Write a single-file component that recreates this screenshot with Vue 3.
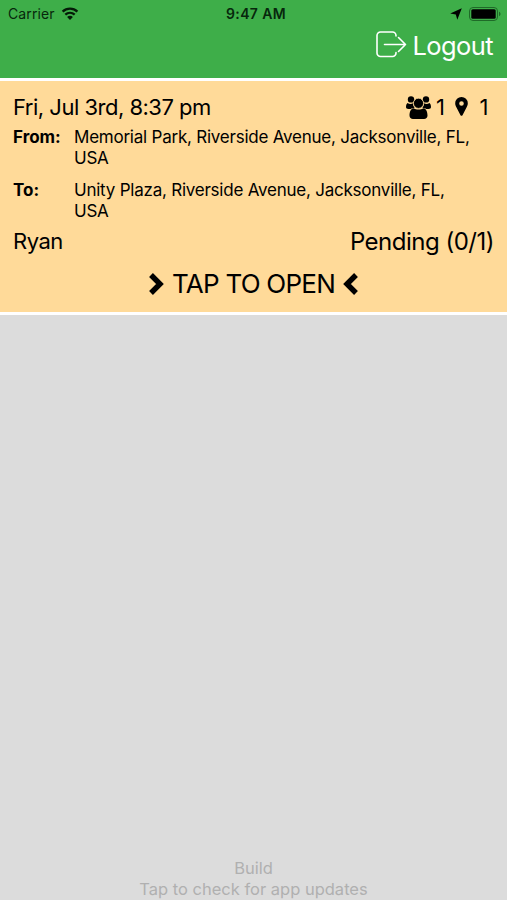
<template>
  <div class="app">
    <header class="header">
      <div class="status-bar">
        <div class="carrier">
          <span>Carrier</span>
          <svg class="wifi" viewBox="0 0 18 13">
            <path d="M1.6 4.6C5.8.7 12.2.7 16.4 4.6M4.3 7.6c2.7-2.4 6.7-2.4 9.4 0" />
            <path class="dot" d="M9 13 6.1 9.9c1.7-1.4 4.1-1.4 5.8 0z" />
          </svg>
        </div>
        <span class="time">9:47 AM</span>
        <div class="indicators">
          <svg class="location" viewBox="0 0 12 12">
            <path d="M11.8.2 7.3 11.8 5.8 6.500.2 5.500z" />
          </svg>
          <svg class="battery" viewBox="0 0 32 14">
            <rect class="shell" x=".5" y=".5" width="28" height="13" rx="3.5" />
            <rect x="2.3" y="2.3" width="24.4" height="9.4" rx="1.5" />
            <path class="cap" d="M30 4.8c2 .7 2 3.7 0 4.4z" />
          </svg>
        </div>
      </div>
      <button class="logout" @click="logout">
        <svg viewBox="0 0 31 27">
          <path d="M20 5V4.5A3.5 3.5 0 0 0 16.5 1H4.5A3.5 3.5 0 0 0 1 4.5v17.500A3.5 3.5 0 0 0 4.5 25.500h12A3.5 3.5 0 0 0 20 22v-.5M8.500 13.500h21M22.500 6.500l7 7-7 7" />
        </svg>
        <span>Logout</span>
      </button>
    </header>

    <section
      v-for="ride in rides"
      :key="ride.id"
      class="ride"
      @click="openRide(ride.id)"
    >
      <div class="row top">
        <span class="date">{{ ride.date }}</span>
        <div class="counts">
          <svg class="users" viewBox="0 0 25 23">
            <circle cx="5" cy="3.400" r="3.200" />
            <circle cx="20" cy="3.400" r="3.200" />
            <path d="M1.600 7C3 8.200 5.500 8.300 7 7.300 7 9.300 7.600 10.600 8.600 11.700 7 11.800 5.600 12.200 4.700 13H2.500C.8 13 0 12.200 0 11 0 9.300.5 7.600 1.600 7zM23.400 7C22 8.200 19.500 8.300 18 7.300 18 9.300 17.400 10.600 16.400 11.700 18 11.800 19.400 12.200 20.300 13H22.500C24.200 13 25 12.200 25 11 25 9.300 24.500 7.600 23.400 7z" />
            <circle class="head" cx="12.500" cy="7.300" r="5.100" />
            <path d="M7.500 12.300C10 14 15 14 17.500 12.300 20.600 12.800 21.500 16.500 21.500 19.500 21.500 21.600 20 23 18 23H7C5 23 3.500 21.600 3.500 19.500 3.500 16.500 4.400 12.800 7.500 12.300z" />
          </svg>
          <span class="riders">{{ ride.riders }}</span>
          <svg class="pin" viewBox="0 0 13 19">
            <path fill-rule="evenodd" d="M6.500 0A6.300 6.300 0 0 0 .2 6.300C.2 8.200.8 9.200 1.500 10.500L5.500 18.200Q6.500 19.500 7.500 18.200L11.500 10.500C12.200 9.200 12.800 8.200 12.800 6.300A6.300 6.300 0 0 0 6.500 0zM6.500 4.200a2.300 2.300 0 1 1 0 4.600 2.300 2.300 0 0 1 0-4.600z" />
          </svg>
          <span class="stops">{{ ride.stops }}</span>
        </div>
      </div>
      <div class="place">
        <label>From:</label>
        <p>{{ ride.from }}</p>
      </div>
      <div class="place">
        <label>To:</label>
        <p>{{ ride.to }}</p>
      </div>
      <div class="row bottom">
        <span class="name">{{ ride.name }}</span>
        <span class="state">{{ ride.state }}</span>
      </div>
      <div class="open">
        <svg viewBox="0 0 15 22"><path d="M2 2 11 11 2 20" /></svg>
        <span>TAP TO OPEN</span>
        <svg viewBox="0 0 15 22"><path d="M13 2 4 11l9 9" /></svg>
      </div>
    </section>

    <footer class="footer">
      <div class="build">Build</div>
      <div class="updates">Tap to check for app updates</div>
    </footer>
  </div>
</template>

<script setup>
import { ref } from "vue";

const rides = ref([
  {
    id: 1,
    date: "Fri, Jul 3rd, 8:37 pm",
    riders: 1,
    stops: 1,
    from: "Memorial Park, Riverside Avenue, Jacksonville, FL, USA",
    to: "Unity Plaza, Riverside Avenue, Jacksonville, FL, USA",
    name: "Ryan",
    state: "Pending (0/1)",
  },
]);

const emit = defineEmits(["logout", "open"]);

const logout = () => {
  emit("logout");
};

const openRide = (id) => {
  emit("open", id);
};
</script>

<style>
body {
  margin: 0;
}
</style>

<style scoped>
.app {
  display: flex;
  flex-direction: column;
  height: 100vh;
  overflow: hidden;
  background: #dcdcdc;
  color: #000;
  font-family: Inter, "Liberation Sans", sans-serif;
  white-space: nowrap;
}

svg {
  display: block;
  flex: none;
}

.header {
  box-sizing: border-box;
  height: 78px;
  background: #3eae49;
}

.status-bar {
  display: grid;
  grid-template-columns: 1fr auto 1fr;
  align-items: center;
  height: 27px;
  padding: 0 6px 0 8px;
  font-size: 14px;
  color: #07270c;
}

.carrier {
  display: flex;
  align-items: center;
  gap: 6px;
  letter-spacing: 0.1px;
}

.wifi {
  width: 18px;
  height: 13px;
  fill: none;
  stroke: #041a07;
  stroke-width: 2.3;
}

.wifi .dot {
  fill: #041a07;
  stroke: none;
}

.time {
  padding-left: 3px;
  font-weight: 600;
  letter-spacing: 0.35px;
}

.indicators {
  display: flex;
  align-items: center;
  justify-content: flex-end;
  gap: 7px;
  fill: #000;
}

.location {
  width: 12px;
  height: 12px;
}

.battery {
  width: 32px;
  height: 14px;
}

.battery .shell {
  fill: none;
  stroke: #1f6a28;
}

.battery .cap {
  fill: #1f6a28;
}

.logout {
  display: flex;
  align-items: center;
  gap: 6px;
  margin: 0 14px 0 auto;
  padding: 0;
  border: 0;
  background: none;
  color: #fff;
  font: inherit;
  font-size: 25.5px;
  line-height: 37px;
  letter-spacing: -0.6px;
}

.logout svg {
  width: 31px;
  height: 27px;
  margin-top: -3px;
  fill: none;
  stroke: #fff;
  stroke-width: 1.6;
  stroke-linecap: round;
  stroke-linejoin: round;
}

.ride {
  box-sizing: border-box;
  height: 237px;
  padding: 11px 13px 0;
  border-top: 3px solid #fff;
  border-bottom: 3px solid #fff;
  background: #ffda99;
}

.row {
  display: flex;
  justify-content: space-between;
  height: 30px;
  font-size: 22px;
  line-height: 30px;
  letter-spacing: -0.5px;
}

.counts {
  display: flex;
  align-items: center;
  margin-right: 6px;
}

.users {
  width: 25px;
  height: 23px;
  margin-right: 5px;
}

.users .head {
  stroke: #ffda99;
  stroke-width: 0.8;
}

.pin {
  width: 13px;
  height: 19px;
  margin: -2px 12px 0 10px;
}

.place {
  display: flex;
  height: 41px;
  padding: 5px 0 7px;
  font-size: 17px;
  line-height: 21px;
}

.place label {
  flex: none;
  width: 61px;
  font-weight: 700;
}

.place p {
  width: 405px;
  margin: 0;
  white-space: normal;
  letter-spacing: -0.23px;
}

.bottom {
  line-height: 27px;
}

.state {
  font-size: 24px;
  line-height: 28px;
}

.open {
  display: flex;
  align-items: center;
  justify-content: center;
  gap: 8px;
  margin-top: 8px;
  font-size: 26px;
  line-height: 36px;
  letter-spacing: -0.75px;
}

.open svg {
  width: 15px;
  height: 22px;
  fill: none;
  stroke: #000;
  stroke-width: 5.4;
}

.footer {
  margin-top: auto;
  color: #b0b0b0;
  font-size: 16.5px;
  line-height: 21px;
  text-align: center;
}
</style>
